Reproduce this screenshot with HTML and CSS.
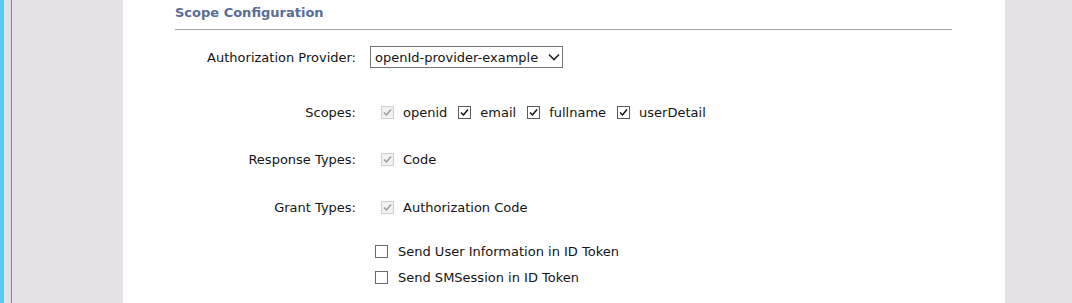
FILE: index.html
```html
<!DOCTYPE html>
<html lang="en">

<head>
    <meta charset="UTF-8">
    <title>Scope Configuration</title>
    <link rel="stylesheet" href="styles.css">
</head>

<body>
    <div class="rail"></div>
    <div class="rail-shade"></div>
    <div class="rail-line"></div>
    <div class="gutter"></div>

    <main class="panel">
        <div class="section-title">Scope Configuration</div>

        <div class="form">
            <!-- Provider -->
            <div class="field field-provider">
                <div class="field-label">Authorization Provider:</div>
                <div class="field-value">
                    <div class="select">
                        <span>openId-provider-example</span>
                        <svg class="chevron" width="12" height="8" viewBox="0 0 12 8">
                            <path d="M1 1.5 L6 6.5 L11 1.5" fill="none" stroke="#222" stroke-width="1.6" />
                        </svg>
                    </div>
                </div>
            </div>

            <!-- Scopes -->
            <div class="field field-scopes">
                <div class="field-label">Scopes:</div>
                <div class="field-value options">
                    <label class="option">
                        <span class="box disabled"><svg width="11" height="11" viewBox="0 0 11 11"><path d="M2 5.5 L4.5 8 L9 2.5" /></svg></span>openid
                    </label>
                    <label class="option">
                        <span class="box"><svg width="11" height="11" viewBox="0 0 11 11"><path d="M2 5.5 L4.5 8 L9 2.5" /></svg></span>email
                    </label>
                    <label class="option">
                        <span class="box"><svg width="11" height="11" viewBox="0 0 11 11"><path d="M2 5.5 L4.5 8 L9 2.5" /></svg></span>fullname
                    </label>
                    <label class="option">
                        <span class="box"><svg width="11" height="11" viewBox="0 0 11 11"><path d="M2 5.5 L4.5 8 L9 2.5" /></svg></span>userDetail
                    </label>
                </div>
            </div>

            <!-- Response types -->
            <div class="field field-response">
                <div class="field-label">Response Types:</div>
                <div class="field-value options">
                    <label class="option">
                        <span class="box disabled"><svg width="11" height="11" viewBox="0 0 11 11"><path d="M2 5.5 L4.5 8 L9 2.5" /></svg></span>Code
                    </label>
                </div>
            </div>

            <!-- Grant types -->
            <div class="field field-grant">
                <div class="field-label">Grant Types:</div>
                <div class="field-value options">
                    <label class="option">
                        <span class="box disabled"><svg width="11" height="11" viewBox="0 0 11 11"><path d="M2 5.5 L4.5 8 L9 2.5" /></svg></span>Authorization Code
                    </label>
                </div>
            </div>

            <!-- Token flags -->
            <div class="field field-flag">
                <div class="field-label"></div>
                <div class="field-value flags">
                    <label class="option">
                        <span class="box empty"></span>Send User Information in ID Token
                    </label>
                </div>
            </div>
            <div class="field field-flag-next">
                <div class="field-label"></div>
                <div class="field-value flags">
                    <label class="option">
                        <span class="box empty"></span>Send SMSession in ID Token
                    </label>
                </div>
            </div>
        </div>
    </main>

    <div class="side"></div>
</body>

</html>
```

FILE: styles.css
```css
* {
    margin: 0;
    padding: 0;
    box-sizing: border-box;
}

body {
    display: flex;
    height: 303px;
    overflow: hidden;
    background-color: #e6e1e4;
    font-family: 'DejaVu Sans', Verdana, sans-serif;
    font-size: 13px;
    color: #141414;
}

/* Left edge of the shell */
.rail {
    width: 4px;
    background: #5ccbf0;
}

.rail-shade {
    width: 7px;
    background: #dfe3e6;
}

.rail-line {
    width: 1px;
    background: #8a8a8a;
}

.gutter {
    width: 111px;
}

.side {
    flex: 1;
}

/* Main panel */
.panel {
    width: 882px;
    background: #ffffff;
    padding: 0 53px 0 52px;
}

.section-title {
    padding: 4px 0 7px;
    line-height: 18px;
    font-weight: bold;
    font-size: 13px;
    color: #5a6d94;
    border-bottom: 1px solid #a3a3a3;
}

.form {
    display: flex;
    flex-direction: column;
}

.field {
    display: grid;
    grid-template-columns: 181px 1fr;
    column-gap: 14px;
    align-items: center;
    height: 24px;
}

.field-provider { margin-top: 15px; }
.field-scopes { margin-top: 31px; }
.field-response { margin-top: 23px; }
.field-grant { margin-top: 24px; }
.field-flag { margin-top: 20px; }
.field-flag-next { margin-top: 2px; }

.field-label {
    text-align: right;
}

/* Select */
.select {
    display: inline-flex;
    align-items: center;
    justify-content: space-between;
    width: 193px;
    height: 22px;
    padding: 0 2px 0 4px;
    border: 1px solid #767676;
    background: #ffffff;
}

.chevron {
    display: block;
}

/* Checkboxes */
.options {
    display: flex;
    padding-left: 11px;
}

.flags {
    display: flex;
    padding-left: 5px;
}

.option {
    display: inline-flex;
    align-items: center;
    margin-right: 11px;
}

.box {
    display: inline-flex;
    align-items: center;
    justify-content: center;
    width: 13px;
    height: 13px;
    margin-right: 9px;
    border: 1px solid #5a5a5a;
    background: #ffffff;
}

.box svg {
    display: block;
}

.box path {
    fill: none;
    stroke: #111111;
    stroke-width: 1.5;
}

.box.disabled {
    border-color: #d0d0d0;
    background: #f2f2f2;
}

.box.disabled path {
    stroke: #9a9a9a;
}

.box.empty {
    border-color: #6a6a6a;
    margin-right: 10px;
}
```
